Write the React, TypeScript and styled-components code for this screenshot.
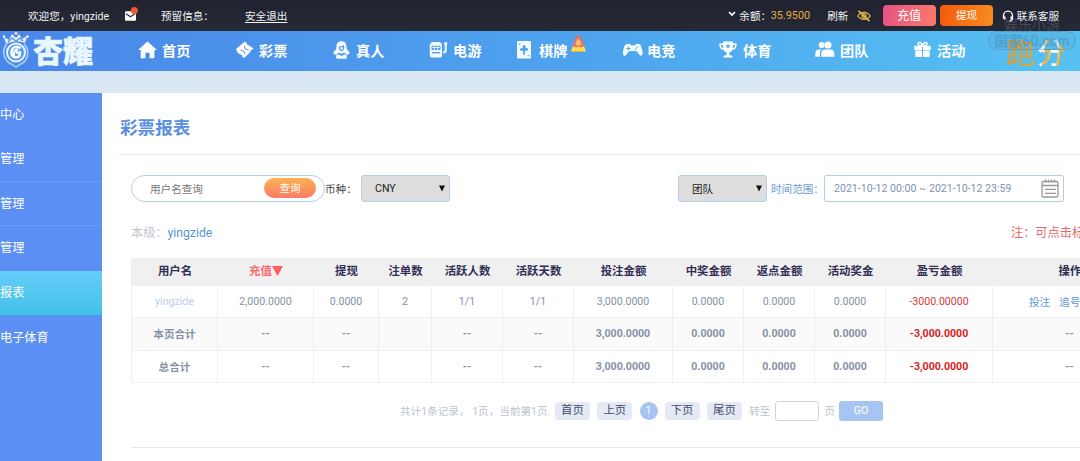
import React from 'react';
import styled, { createGlobalStyle, css } from 'styled-components';

const GlobalStyle = createGlobalStyle`
  * { box-sizing: border-box; }
  html, body { margin: 0; padding: 0; }
  body {
    font-family: Roboto, "Noto Sans CJK SC", sans-serif;
    font-size: 10.6px;
    color: #333;
    background: #fff;
    overflow: hidden;
  }
  button, input { font-family: inherit; }
`;

const Page = styled.div`
  width: 1080px;
  height: 461px;
  overflow: hidden;
  display: flex;
  flex-direction: column;
`;

/* ---------- top bar ---------- */

const TopBar = styled.header`
  height: 31px;
  flex: none;
  display: flex;
  justify-content: space-between;
  align-items: center;
  padding: 0 21px 0 28px;
  background: linear-gradient(#20232f, #262a36);
  color: #f1f1f3;
  white-space: nowrap;
`;

const TopGroup = styled.div`
  display: flex;
  align-items: center;
  height: 31px;
`;

const Welcome = styled.span`
  width: 97px;
  margin-top: -1px;
`;

const MailIcon = styled.svg`
  width: 13px;
  height: 14px;
  margin-right: 23px;
  margin-top: -4px;
`;

const Reserved = styled.span`
  width: 84px;
  margin-top: -1px;
`;

const Logout = styled.a`
  margin-top: -1px;
  text-decoration: underline;
  text-underline-offset: 2px;
`;

const Chevron = styled.svg`
  width: 8px;
  height: 6px;
  margin: -3px 3px 0 0;
`;

const Amount = styled.span`
  color: #e5ab45;
  font-size: 10.9px;
  width: 56.5px;
  margin-left: -0.5px;
`;

const Refresh = styled.span`
  width: 29.5px;
`;

const EyeIcon = styled.svg`
  width: 14px;
  height: 12px;
  margin-right: 12px;
`;

const ActionButton = styled.button<{ $from: string; $to: string; $size: number }>`
  width: 53px;
  height: 21px;
  padding: 0;
  margin-right: 4.5px;
  border: 0;
  border-radius: 4px;
  color: #fff;
  font-size: ${p => p.$size}px;
  line-height: 20px;
  background: linear-gradient(100deg, ${p => p.$from}, ${p => p.$to});
`;

const HeadsetIcon = styled.svg`
  width: 12px;
  height: 12px;
  margin: 0 3px 0 4px;
`;

/* ---------- navigation ---------- */

const Nav = styled.nav`
  position: relative;
  height: 39.5px;
  flex: none;
  display: flex;
  align-items: center;
  background: linear-gradient(90deg, #4a86e9, #4ea4ee 55%, #57c2f2);
  color: #fff;
`;

const Brand = styled.div`
  width: 130px;
  display: flex;
  align-items: center;
`;

const Crest = styled.svg`
  width: 30px;
  height: 37px;
  flex: none;
  margin: -2px 0 0 1px;
`;

const BrandName = styled.span`
  margin: 2px 0 0 2px;
  font-size: 30px;
  line-height: 36px;
  font-weight: 900;
  color: #e9f8ff;
  -webkit-text-stroke: 0.6px #e9f8ff;
`;

const NavItem = styled.a<{ $width?: number }>`
  width: ${p => p.$width ?? 97}px;
  height: 39px;
  padding-bottom: 2px;
  flex: none;
  display: flex;
  align-items: center;
  font-size: 14.2px;
  font-weight: 700;
  white-space: nowrap;
`;

const NavIconBox = styled.span`
  width: 32px;
  display: flex;
  justify-content: center;
  padding-left: 2px;

  svg { display: block; }
`;

const Flame = styled.svg`
  width: 15px;
  height: 18px;
  margin: -13px 0 0 4px;
`;

const PaoFen = styled.span`
  margin: 7px 0 0 4px;
  display: flex;
  align-items: center;
  gap: 2px;
  font-size: 29px;
  line-height: 34px;
  font-weight: 500;
`;

const PaoFenChar = styled.span<{ $stops: string }>`
  background: linear-gradient(100deg, ${p => p.$stops});
  -webkit-background-clip: text;
  background-clip: text;
  color: transparent;
`;

const Watermark = styled.div`
  position: absolute;
  right: 4px;
  top: -12px;
  width: 88px;
  display: flex;
  flex-direction: column;
  align-items: center;
  color: rgba(120, 130, 145, 0.38);
  font-size: 14px;
  line-height: 12px;
  white-space: nowrap;
`;

const WatermarkPill = styled.span`
  width: 88px;
  height: 19px;
  border: 1px solid rgba(80, 130, 165, 0.4);
  border-radius: 9px;
  background: rgba(90, 130, 160, 0.1);
  text-align: center;
  font-size: 14px;
  line-height: 19px;
  font-weight: 700;
  color: rgba(60, 120, 165, 0.36);
`;

/* ---------- body ---------- */

const Band = styled.div`
  height: 22.5px;
  flex: none;
  background: #d8e7f3;
`;

const Body = styled.div`
  flex: 1;
  display: flex;
  min-height: 0;
`;

const Sidebar = styled.aside`
  width: 102px;
  flex: none;
  background: #5b8ff3;
`;

const SideItem = styled.a<{ $active?: boolean; $line?: boolean; $first?: boolean }>`
  display: flex;
  align-items: center;
  height: ${p => (p.$first ? 44 : 44.6)}px;
  padding-bottom: ${p => (p.$first ? 2 : 1)}px;
  font-size: 12.2px;
  color: #fff;
  border-bottom: 1px solid ${p => (p.$line ? '#6c9cf6' : 'transparent')};
  ${p => p.$active && css`
    border-bottom: 0;
    padding-bottom: 2px;
    background: linear-gradient(#66cdfa, #41c2e8);
  `}
`;

const Main = styled.main`
  flex: 1;
  min-width: 0;
  overflow: hidden;
  padding-left: 17px;
  background: #fff;
`;

const Title = styled.h1`
  margin: 0;
  height: 62px;
  padding: 22px 0 0 1px;
  font-size: 17.6px;
  line-height: 26px;
  font-weight: 700;
  color: #5c8fe2;
  border-bottom: 1px solid #e9e9ec;
`;

const Content = styled.section`
  padding-left: 12px;
`;

const Filters = styled.div`
  display: flex;
  align-items: center;
  justify-content: space-between;
  padding: 20px 16px 0 0;
`;

const FilterGroup = styled.div`
  display: flex;
  align-items: center;
  height: 27px;
`;

const SearchBox = styled.div`
  width: 194px;
  height: 27px;
  display: flex;
  align-items: center;
  justify-content: space-between;
  padding: 0 8px 1px 18px;
  border: 1px solid #b3cdea;
  border-radius: 14px;
  color: #757575;
`;

const SearchButton = styled.button`
  width: 52px;
  height: 20px;
  padding: 0;
  border: 0;
  border-radius: 10px;
  font-size: 10.6px;
  line-height: 19px;
  color: #fff;
  background: linear-gradient(#fdb151, #f97c66);
`;

const FieldLabel = styled.span<{ $blue?: boolean; $width: number }>`
  width: ${p => p.$width}px;
  padding-left: ${p => (p.$blue ? 4 : 0)}px;
  white-space: nowrap;
  color: ${p => (p.$blue ? '#6d9bd2' : '#444')};
`;

const Select = styled.div`
  width: 89px;
  height: 27px;
  display: flex;
  align-items: center;
  justify-content: space-between;
  padding: 0 4px 0 13px;
  border: 1px solid #b6cfee;
  border-radius: 3px;
  background: #dddddd;
  color: #222;
`;

const DateBox = styled.div`
  width: 240px;
  height: 27px;
  display: flex;
  align-items: center;
  justify-content: space-between;
  padding: 0 4px 0 9px;
  border: 1px solid #b3cdea;
  border-radius: 2px;
  color: #8193b0;
  white-space: nowrap;
`;

const LevelRow = styled.div`
  display: flex;
  justify-content: space-between;
  height: 56px;
  padding-top: 22px;
  font-size: 12.2px;
  line-height: 18px;
  color: #c3c6d0;
`;

const LevelName = styled.a`
  color: #5795d0;
`;

const Note = styled.span`
  width: 69px;
  white-space: nowrap;
  color: #e36b6b;
`;

const Table = styled.table`
  width: 1015px;
  table-layout: fixed;
  border-collapse: separate;
  border-spacing: 0;
  border-left: 1px solid #ececf2;
`;

const Th = styled.th<{ $width: number; $hot?: boolean }>`
  width: ${p => p.$width}px;
  height: 27.5px;
  padding: 0 0 2px;
  background: #f0f0f0;
  font-size: 11.4px;
  line-height: 16px;
  font-weight: 700;
  white-space: nowrap;
  color: ${p => (p.$hot ? '#fa6a6c' : '#332e56')};
`;

const SortMark = styled.svg`
  width: 11px;
  height: 10px;
  vertical-align: -1px;
`;

const Tr = styled.tr<{ $alt?: boolean; $strong?: boolean }>`
  background: ${p => (p.$alt ? '#fafafa' : '#fff')};
  font-weight: ${p => (p.$strong ? 700 : 400)};
  color: #8791a6;
`;

const Td = styled.td<{ $color?: string }>`
  height: 32.6px;
  padding: 0;
  text-align: center;
  font-size: 10.6px;
  white-space: nowrap;
  border-right: 1px solid #eeeef4;
  border-bottom: 1px solid #eeeef3;
  ${p => p.$color && css`color: ${p.$color};`}
`;

const RowLinks = styled.div`
  display: flex;
  gap: 9px;
  padding-left: 36px;
  color: #5e9ad6;
`;

const Pager = styled.div`
  height: 65px;
  display: flex;
  align-items: center;
  padding: 0 0 9px 269px;
  white-space: nowrap;
  color: #bcc3d1;
  border-bottom: 1px solid #e9e9ec;
`;

const Summary = styled.span`
  width: 155px;
  white-space: pre;
`;

const PageButton = styled.a`
  width: 35px;
  height: 18px;
  margin-right: 7.3px;
  border-radius: 4px;
  background: #e4e9f5;
  color: #414b6b;
  font-size: 11.4px;
  line-height: 17px;
  text-align: center;
`;

const CurrentPage = styled.span`
  width: 18px;
  height: 18px;
  margin-right: 7px;
  border-radius: 50%;
  background: #a6c5f3;
  color: #fff;
  line-height: 18px;
  text-align: center;
`;

const PageInput = styled.input`
  width: 44px;
  height: 20px;
  margin: 0 5px 0 5px;
  border: 1px solid #d0d3da;
  border-radius: 3px;
  background: #fff;
`;

const GoButton = styled.button`
  width: 44px;
  height: 20px;
  margin-left: 4px;
  padding: 0;
  border: 0;
  border-radius: 3px;
  background: #a6c5f3;
  color: #fff;
  font-size: 10.6px;
`;

const icons = {
  home: (
    <svg width="19" height="18" viewBox="0 0 19 18" fill="#fff">
      <path d="M9.500.5 19 9h-2.600v8.200h-4.800v-5.400H7.400v5.400H2.700V9H0z" />
    </svg>
  ),
  ticket: (
    <svg width="19" height="18" viewBox="0 0 19 18">
      <path fill="#fff" d="M.6 8.500 9.800.5l2.200 1.800c-.4 1.200.6 2.200 1.900 1.900l4.400 3.400-1.100 1.100c-1.300-.2-2.100.9-1.700 2L9.200 17l-2-1.600c.3-1.400-.8-2.200-2-1.900L1.700 11l1-1z" />
      <path fill="none" stroke="#4b90eb" strokeWidth="1" d="m9.200 4.700 1.200 3.400 3.400 1M5.500 9.100l3.400 1.200 1 3" />
    </svg>
  ),
  dealer: (
    <svg width="17" height="18" viewBox="0 0 17 18">
      <path fill="#f4fcff" d="M8.500.3c3.200 0 5 2.200 5 5.200 0 2.300.6 3.800 2.700 5.100.8 1.500.3 3.100-1.600 3.200l-1-.2.4 2.300c-.2 1.200-1 1.900-2.500 1.900h-6c-1.500 0-2.300-.7-2.500-1.900l.4-2.300-1 .2C.5 13.700 0 12.100.8 10.600c2.100-1.300 2.700-2.800 2.700-5.100 0-3 1.800-5.200 5-5.200z" />
      <path fill="#4c98ec" d="M5.800 5.600c1.800.1 3.300-.5 4.200-1.500l1.300 1.700c0 2.700-1.100 4.400-2.800 4.400S5.700 8.400 5.800 5.600zM2.800 13.300l3.700-1.600 2 1.300 2-1.300 3.700 1.600-3.300.4-2.400 1.300-2.400-1.300z" />
      <circle cx="8.600" cy="7.300" r="1.500" fill="#d9f1fb" />
    </svg>
  ),
  slot: (
    <svg width="19" height="17" viewBox="0 0 19 17">
      <path fill="#f1fbff" d="M3 1h8l2 2.500v11.600L12 16.500H2l-1.200-1.400V3.500z" />
      <rect x="2.500" y="4.700" width="9" height="4.200" rx="1" fill="#4c9ceb" />
      <path stroke="#f1fbff" d="M5.300 4.700v4.200M8.500 4.700v4.200M3 6.500h8" strokeWidth=".8" />
      <path stroke="#4c9ceb" strokeWidth="1.300" d="M3 11.700h8" />
      <path fill="none" stroke="#f1fbff" strokeWidth="2" d="M16.700 2v7.200c0 1.600-.9 2.300-2.700 2.300" />
      <circle cx="16.700" cy="2.600" r="1.700" fill="#f1fbff" />
    </svg>
  ),
  card: (
    <svg width="14" height="18" viewBox="0 0 14 18">
      <rect width="14" height="17.500" rx="1" fill="#f1fbff" />
      <path fill="#4ca3eb" d="M5.800 7.400C5.100 5.500 5.900 4.300 7.200 4.300s2 1.200 1.200 2.900c1.700-.5 2.700.2 2.700 1.200S9.700 9.900 8.100 9.500l-.4 4.200H6.100L6.400 9.700c-1.700.7-3.500 0-3.500-1.200s1.300-1.600 2.900-1.100z" />
      <path stroke="#4ca3eb" d="M1.500 3.200h2M10.500 14.700h2" />
    </svg>
  ),
  gamepad: (
    <svg width="21" height="14" viewBox="0 0 21 14">
      <path fill="#f4fcff" d="M5 1h3l1.500 1.500h3L14 1h3c1.700 0 2.600 3.500 3.400 7 .5 2.500.2 4.500-1.200 4.800-1.600.3-3-3.300-4.600-4.300-1.200-.6-6.400-.6-7.600 0-1.700 1-2.600 4.600-4.500 4.300C.8 12.500.6 10.500 1.100 8 1.800 4.500 3 1 5 1z" />
      <path stroke="#4dafec" strokeWidth="1.100" d="M4.400 5.500h4M6.400 3.500v4M13 6.600l1.200-1.100M14.600 4.700l1.200-1.100" />
    </svg>
  ),
  trophy: (
    <svg width="18" height="17" viewBox="0 0 18 17">
      <path fill="#fff" d="M4 .5h10v2h3.700c0 4-1.500 6.300-4.500 6.500-.8 1.500-1.800 2.200-3 2.500v2.300l3.300 1.200v1.500h-9V15l3.300-1.200v-2.300C6.600 11.200 5.600 10.500 4.800 9 1.800 8.800.3 6.500.3 2.500H4zM1.900 4c.2 1.900.9 3 2.200 3.400V4zm12 0v3.400c1.300-.4 2-1.500 2.200-3.400z" />
      <path fill="#4fb1ed" d="m9 2.500.8 1.700 1.800.2-1.400 1.200.4 1.800L9 6.500l-1.600.9.400-1.800-1.400-1.200 1.800-.2z" />
    </svg>
  ),
  team: (
    <svg width="20" height="17" viewBox="0 0 20 17" fill="#fff">
      <circle cx="6.700" cy="4" r="2.900" />
      <circle cx="13" cy="4" r="3.500" />
      <path d="M.3 15.800v-3.600c0-2.300 1.600-3.700 4-3.700h2.200C5.300 9.600 4.900 10.800 4.900 12.500v3.300zM6.300 15.800v-3.500c0-2.500 1.500-3.800 4-3.800h5c2.500 0 4 1.300 4 3.800v3.500z" />
    </svg>
  ),
  gift: (
    <svg width="17" height="17" viewBox="0 0 17 17">
      <path fill="#fff" d="M.3 4.800H8V9H.3zM9 4.800h7.700V9H9zM1.300 9.600H8V16H1.300zM9 9.600h6.700V16H9z" />
      <path fill="none" stroke="#fff" strokeWidth="1.500" d="M8.500 5C6 5 3.600 4 4 2.500 4.500.7 7.700 1 8.500 5c.8-4 4-4.300 4.500-2.500.4 1.500-2 2.500-4.500 2.500z" />
    </svg>
  ),
};

const navItems: { icon: keyof typeof icons; label: string; width?: number; hot?: boolean }[] = [
  { icon: 'home', label: '首页' },
  { icon: 'ticket', label: '彩票' },
  { icon: 'dealer', label: '真人' },
  { icon: 'slot', label: '电游', width: 86 },
  { icon: 'card', label: '棋牌', width: 108, hot: true },
  { icon: 'gamepad', label: '电竞', width: 96 },
  { icon: 'trophy', label: '体育' },
  { icon: 'team', label: '团队' },
  { icon: 'gift', label: '活动' },
];

const columns: [string, number][] = [
  ['用户名', 86], ['充值', 96], ['提现', 65], ['注单数', 53], ['活跃人数', 71], ['活跃天数', 71],
  ['投注金额', 99], ['中奖金额', 71], ['返点金额', 71], ['活动奖金', 71], ['盈亏金额', 107], ['操作', 154],
];

const totals = ['--', '--', '', '--', '--', '3,000.0000', '0.0000', '0.0000', '0.0000'];

const DownArrow = () => (
  <svg width="6" height="7" viewBox="0 0 6 7"><path d="M0 .5h6L3 6.500z" fill="#111" /></svg>
);

const TotalRow = ({ label, alt }: { label: string; alt?: boolean }) => (
  <Tr $alt={alt} $strong>
    <Td>{label}</Td>
    {totals.map((v, i) => <Td key={i}>{v}</Td>)}
    <Td $color="#d81e1e">-3,000.0000</Td>
    <Td>--</Td>
  </Tr>
);

export default function App() {
  return (
    <Page>
      <GlobalStyle />
      <TopBar>
        <TopGroup>
          <Welcome>欢迎您，yingzide</Welcome>
          <MailIcon viewBox="0 0 13 14">
            <path d="M0 5.500Q0 4.300 1.200 4.300h8.600q1.200 0 1.200 1.200v7q0 1.200-1.200 1.200H1.200Q0 13.700 0 12.500z" fill="#fff" />
            <path d="m1 6.800 4.500 3L10 6.800" fill="none" stroke="#2a2d39" strokeWidth="1.200" />
            <circle cx="9.400" cy="3.600" r="3.500" fill="#ec5a2c" />
          </MailIcon>
          <Reserved>预留信息：</Reserved>
          <Logout>安全退出</Logout>
        </TopGroup>
        <TopGroup>
          <Chevron viewBox="0 0 8 6"><path d="m1 1 3 3 3-3" fill="none" stroke="#fff" strokeWidth="1.700" /></Chevron>
          <span>余额：</span>
          <Amount>35.9500</Amount>
          <Refresh>刷新</Refresh>
          <EyeIcon viewBox="0 0 14 12" fill="none" stroke="#e3b74a" strokeWidth="1.300">
            <path d="M.8 6C3.800 1.200 10.200 1.200 13.200 6 10.200 10.500 3.800 10.500.8 6z" />
            <circle cx="7" cy="6" r="2" />
            <path d="m1.500.8 11 10.400" strokeWidth="1.600" />
          </EyeIcon>
          <ActionButton $from="#e65284" $to="#fa7968" $size={12.2}>充值</ActionButton>
          <ActionButton $from="#f45a0a" $to="#f88c22" $size={10.6}>提现</ActionButton>
          <HeadsetIcon viewBox="0 0 12 12" fill="none" stroke="#fff" strokeWidth="1.300">
            <path d="M1.500 8V5.700a4.500 4.500 0 0 1 9 0V8c0 2-1 3-3 3" />
            <path d="M2.500 6.500v3M9.500 6.500v3" strokeWidth="2" />
          </HeadsetIcon>
          <span>联系客服</span>
        </TopGroup>
      </TopBar>

      <Nav>
        <Brand>
          <Crest viewBox="0 0 30 37">
            <path d="m5 13-2-7 5 3 3-6 4 4 3-4 3 5 5-3-2 7q-9-4-19 1z" fill="#e3f2ff" />
            <path d="m7 11 4-4 4 3 4-3 3 3" fill="none" stroke="#5c86dc" strokeWidth="1.300" />
            <circle cx="15" cy="2.200" r="1.500" fill="#ffd5cf" />
            <circle cx="3" cy="5.500" r="1.200" fill="#fff" />
            <circle cx="26.500" cy="5.500" r="1.200" fill="#fff" />
            <path d="M6 13c-5 5-4 13 1 18l8 5 8-5c5-5 5-13 0-18" fill="none" stroke="#9ccbf7" strokeWidth="1.800" />
            <circle cx="15" cy="21.500" r="9" fill="#5e98ec" stroke="#e9f6ff" strokeWidth="2" />
            <path d="M19.500 17.500c-3-3-9-2-9 4 0 5 5 6 8 3.500l.5-3.500h-4M13 25.500c-1-3.500 0-6 4-7.500" fill="none" stroke="#f2fbff" strokeWidth="2.500" />
          </Crest>
          <BrandName>杏耀</BrandName>
        </Brand>
        {navItems.map(item => (
          <NavItem key={item.label} $width={item.width}>
            <NavIconBox>{icons[item.icon]}</NavIconBox>
            {item.label}
            {item.hot && (
              <Flame viewBox="0 0 15 18">
                <path d="M7 0c.5 1.500 2.800 2 3.500 4.500 1.500 3 1.500 5 3 8L14 18H1l.5-6C3.500 9 3 6 4.500 3.800 5.500 3.500 6.500 2 7 0z" fill="#e4716a" />
                <path d="M7.500 4.500c2 1.500 3 4.500 2.800 7H4.700c-.2-3 .8-5.500 2.800-7z" fill="#f9bc65" />
                <path d="M0 17.500 2 12l3 1.500 2.500-1 2.500 1 3-1.500 2 5.500z" fill="#fbe04d" />
              </Flame>
            )}
          </NavItem>
        ))}
        <PaoFen>
          <PaoFenChar $stops="#d79d3c, #c9a64e 60%, #e2a83d">跑</PaoFenChar>
          <PaoFenChar $stops="#fff 24%, #e5b24c 32%, #e5b24c 42%, #fff 50%, #fff 66%, #efb23b 72%">分</PaoFenChar>
        </PaoFen>
        <Watermark>
          <span>娱乐小游</span>
          <WatermarkPill>国家60.com</WatermarkPill>
        </Watermark>
      </Nav>
      <Band />

      <Body>
        <Sidebar>
          <SideItem $first>中心</SideItem>
          <SideItem $line>管理</SideItem>
          <SideItem $line>管理</SideItem>
          <SideItem>管理</SideItem>
          <SideItem $active>报表</SideItem>
          <SideItem>电子体育</SideItem>
        </Sidebar>
        <Main>
          <Title>彩票报表</Title>
          <Content>
            <Filters>
              <FilterGroup>
                <SearchBox>
                  <span>用户名查询</span>
                  <SearchButton>查询</SearchButton>
                </SearchBox>
                <FieldLabel $width={36}>币种：</FieldLabel>
                <Select>CNY<DownArrow /></Select>
              </FilterGroup>
              <FilterGroup>
                <Select>团队<DownArrow /></Select>
                <FieldLabel $blue $width={57}>时间范围：</FieldLabel>
                <DateBox>
                  2021-10-12 00:00 ~ 2021-10-12 23:59
                  <svg width="18" height="19" viewBox="0 0 18 19" fill="none" stroke="#999" strokeWidth="1.300">
                    <rect x="1" y="2.500" width="16" height="15.500" rx="1.500" />
                    <path d="M1 6.500h16M4 10.300h11M4 14.300h11M4.500.5v3M7.500.5v3M10.500.5v3M13.500.5v3" />
                  </svg>
                </DateBox>
              </FilterGroup>
            </Filters>

            <LevelRow>
              <span>本级：<LevelName>yingzide</LevelName></span>
              <Note>注：可点击标题排序</Note>
            </LevelRow>

            <Table>
              <thead>
                <tr>
                  {columns.map(([label, width]) => (
                    <Th key={label} $width={width} $hot={label === '充值'}>
                      {label}
                      {label === '充值' && (
                        <SortMark viewBox="0 0 11 10"><path d="M0 0h11L5.500 10z" fill="#fa5f62" /></SortMark>
                      )}
                    </Th>
                  ))}
                </tr>
              </thead>
              <tbody>
                <Tr>
                  <Td $color="#b9cfe6">yingzide</Td>
                  <Td>2,000.0000</Td>
                  <Td>0.0000</Td>
                  <Td>2</Td>
                  <Td>1/1</Td>
                  <Td>1/1</Td>
                  <Td>3,000.0000</Td>
                  <Td>0.0000</Td>
                  <Td>0.0000</Td>
                  <Td>0.0000</Td>
                  <Td $color="#d63a3a">-3000.00000</Td>
                  <Td><RowLinks><span>投注</span><span>追号</span></RowLinks></Td>
                </Tr>
                <TotalRow label="本页合计" alt />
                <TotalRow label="总合计" />
              </tbody>
            </Table>

            <Pager>
              <Summary>{'共计1条记录， 1页，当前第1页'}</Summary>
              <PageButton>首页</PageButton>
              <PageButton>上页</PageButton>
              <CurrentPage>1</CurrentPage>
              <PageButton>下页</PageButton>
              <PageButton>尾页</PageButton>
              <span>转至</span>
              <PageInput />
              <span>页</span>
              <GoButton>GO</GoButton>
            </Pager>
          </Content>
        </Main>
      </Body>
    </Page>
  );
}
